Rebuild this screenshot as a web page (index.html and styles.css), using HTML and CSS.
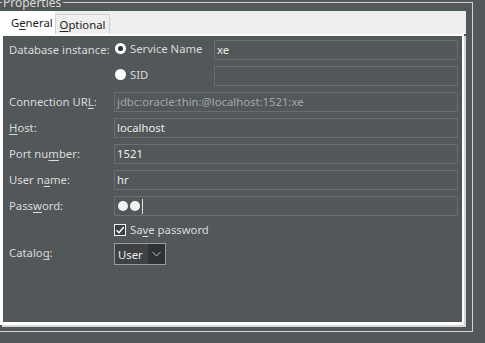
FILE: index.html
```html
<!DOCTYPE html>
<html lang="en">
<head>
  <meta charset="UTF-8" />
  <title>Connection Properties</title>
  <link rel="stylesheet" href="styles.css">
</head>
<body>

  <!-- Properties group -->
  <div class="group">
    <span class="legend">Properties</span>

    <div class="tabpane">
      <div class="tabbar">
        <div class="tab active"><span>G<u>e</u>neral</span></div>
        <div class="tab"><span><u>O</u>ptional</span></div>
      </div>

      <div class="panel">
        <div class="form">
          <label class="lbl">Database instance:</label>
          <div class="choice"><span class="radio on"></span><span>Service Name</span></div>
          <div class="field">xe</div>

          <span></span>
          <div class="choice"><span class="radio"></span><span>SID</span></div>
          <div class="field"></div>

          <label class="lbl">Connection UR<u>L</u>:</label>
          <div class="field wide disabled">jdbc:oracle:thin:@localhost:1521:xe</div>

          <label class="lbl"><u>H</u>ost:</label>
          <div class="field wide">localhost</div>

          <label class="lbl">Port nu<u>m</u>ber:</label>
          <div class="field wide">1521</div>

          <label class="lbl">User n<u>a</u>me:</label>
          <div class="field wide">hr</div>

          <label class="lbl">Pass<u>w</u>ord:</label>
          <div class="field wide pw"><span class="dot"></span><span class="dot"></span><span class="caret"></span></div>

          <span></span>
          <div class="check-row">
            <span class="checkbox">
              <svg width="10" height="10" viewBox="0 0 10 10"><path d="M1.5 5.2 L4 7.7 L8.8 2" fill="none" stroke="#fff" stroke-width="1.4"/></svg>
            </span>
            <span>Sa<u>v</u>e password</span>
          </div>

          <label class="lbl">Catalo<u>g</u>:</label>
          <div class="combo-cell">
            <div class="combo">
              <span class="combo-value">User</span>
              <span class="combo-arrow">
                <svg width="9" height="6" viewBox="0 0 9 6"><path d="M0.5 1 L4.5 5 L8.5 1" fill="none" stroke="#b8b8b8" stroke-width="1"/></svg>
              </span>
            </div>
          </div>
        </div>
      </div>
    </div>
  </div>

</body>
</html>
```

FILE: styles.css
```css
:root {
  --bg: #525759;
  --text: #dadada;
  --value: #ececec;
  --field-border: #6a6e71;
}

* {
  box-sizing: border-box;
}

body {
  margin: 0;
  background-color: var(--bg);
  color: var(--text);
  font-family: 'Noto Sans', 'Noto Sans CJK KR', sans-serif;
  font-size: 11.3px;
  overflow: hidden;
}

u {
  text-decoration-thickness: 1px;
  text-underline-offset: 2px;
}

/* outer titled border */
.group {
  position: relative;
  margin: 2px 0 0 -6px;
  width: 479px;
  height: 330px;
  border: 1px solid #d2d2d2;
}

.legend {
  position: absolute;
  top: -8px;
  left: 7px;
  padding: 0 2px 0 1px;
  font-size: 12px;
  line-height: 16px;
  background-color: var(--bg);
  color: var(--text);
}

/* tabs */
.tabpane {
  margin: 8px 0 0 5px;
  width: 466px;
  height: 316px;
}

.tabbar {
  display: flex;
  align-items: flex-end;
  height: 23px;
  background-color: #eeeeee;
}

.tab {
  display: flex;
  align-items: center;
  justify-content: center;
  width: 55px;
  height: 20px;
  color: #222;
  background-color: #efefef;
  border: 1px solid #d2d2d2;
  border-bottom: none;
}

.tab.active {
  justify-content: flex-start;
  height: 23px;
  padding: 0 0 1px 11px;
  background-color: #fff;
  border: none;
}

.panel {
  width: 464px;
  height: 291px;
  border-style: solid;
  border-color: #fff;
  border-width: 2px 2px 3px 3px;
  box-shadow: 2px 2px 0 #d6d6d6;
}

/* form */
.form {
  display: grid;
  grid-template-columns: 105px 100px 1fr;
  row-gap: 6px;
  padding: 4px 4px 0 6px;
}

.lbl {
  height: 20px;
  line-height: 19px;
  white-space: nowrap;
}

.choice {
  display: flex;
  align-items: center;
  gap: 4px;
  height: 20px;
  padding-left: 1px;
  padding-bottom: 3px;
  white-space: nowrap;
}

.radio {
  position: relative;
  width: 11px;
  height: 11px;
  border-radius: 50%;
  background-color: #fff;
}

.radio.on::after {
  content: "";
  position: absolute;
  left: 3px;
  top: 3px;
  width: 5px;
  height: 5px;
  border-radius: 50%;
  background-color: #2b2e30;
}

.field {
  height: 20px;
  line-height: 17px;
  padding-left: 2px;
  border: 1px solid var(--field-border);
  color: var(--value);
  white-space: nowrap;
}

.field.wide {
  grid-column: 2 / 4;
}

.field.disabled {
  color: #a3a7a9;
}

.field.pw {
  display: flex;
  align-items: center;
}

.dot {
  width: 10px;
  height: 10px;
  margin: 0 1px 0 1px;
  border-radius: 50%;
  background-color: #f4f4f4;
}

.caret {
  width: 1px;
  height: 15px;
  margin-left: 1px;
  background-color: #e0e0e0;
}

.check-row {
  grid-column: 2 / 4;
  display: flex;
  align-items: center;
  gap: 4px;
  height: 15px;
}

.checkbox {
  display: flex;
  align-items: center;
  justify-content: center;
  width: 12px;
  height: 12px;
  border: 1px solid #f0f0f0;
  background-color: #3c3f41;
}

.combo-cell {
  grid-column: 2 / 4;
}

.combo {
  display: flex;
  width: 52px;
  height: 22px;
  border: 1px solid #9c9c9c;
}

.combo-value {
  display: flex;
  align-items: center;
  width: 33px;
  padding-left: 3px;
  background-color: #3f4244;
  color: var(--value);
}

.combo-arrow {
  display: flex;
  align-items: center;
  justify-content: center;
  flex: 1;
  background-color: #2f3234;
}
```
